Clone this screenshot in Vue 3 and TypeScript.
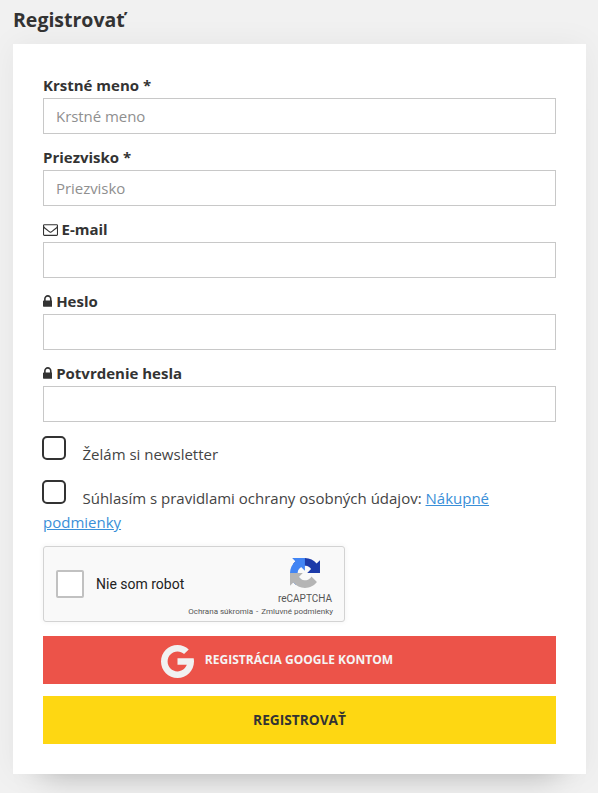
<script setup lang="ts">
import { reactive, ref } from 'vue'

interface Field {
  id: string
  label: string
  type: string
  placeholder?: string
  icon?: 'envelope' | 'lock'
}

const fields: Field[] = [
  { id: 'first', label: 'Krstné meno *', type: 'text', placeholder: 'Krstné meno' },
  { id: 'last', label: 'Priezvisko *', type: 'text', placeholder: 'Priezvisko' },
  { id: 'email', label: 'E-mail', type: 'email', icon: 'envelope' },
  { id: 'password', label: 'Heslo', type: 'password', icon: 'lock' },
  { id: 'confirm', label: 'Potvrdenie hesla', type: 'password', icon: 'lock' },
]

const values = reactive<Record<string, string>>({ first: '', last: '', email: '', password: '', confirm: '' })
const newsletter = ref(false)
const terms = ref(false)
const robot = ref(false)
</script>

<template>
  <main class="page">
    <h1 class="title">Registrovať</h1>
    <form class="card" @submit.prevent>
      <div v-for="f in fields" :key="f.id" class="field">
        <label class="label" :for="f.id">
          <svg v-if="f.icon === 'envelope'" class="envelope" viewBox="0 0 1792 1792">
            <path d="M1664 1504v-768q-32 36-69 66-268 206-426 338-51 43-83 67t-86.500 48.500-102.500 24.500h-2q-48 0-102.500-24.500t-86.500-48.500-83-67q-158-132-426-338-37-30-69-66v768q0 13 9.500 22.500t22.500 9.500h1472q13 0 22.500-9.500t9.500-22.500zm0-1051v-24.500l-.5-13-3-12.500-5.500-9-9-7.500-14-2.500h-1472q-13 0-22.500 9.500t-9.500 22.500q0 168 147 284 193 152 401 317 6 5 35 29.500t46 37.500 44.500 31.500 50.500 27.500 43 9h2q20 0 43-9t50.500-27.500 44.500-31.500 46-37.500 35-29.500q208-165 401-317 54-43 100.500-115.500t46.500-131.500zm128-37v1088q0 66-47 113t-113 47h-1472q-66 0-113-47t-47-113v-1088q0-66 47-113t113-47h1472q66 0 113 47t47 113z" />
          </svg>
          <svg v-else-if="f.icon === 'lock'" class="lock" viewBox="320 0 1152 1792">
            <path d="M640 768h512v-192q0-106-75-181t-181-75-181 75-75 181v192zm832 96v576q0 40-28 68t-68 28h-960q-40 0-68-28t-28-68v-576q0-40 28-68t68-28h32v-192q0-184 132-316t316-132 316 132 132 316v192h32q40 0 68 28t28 68z" />
          </svg>
          <span>{{ f.label }}</span>
        </label>
        <input :id="f.id" v-model="values[f.id]" class="input" :type="f.type" :placeholder="f.placeholder" />
      </div>

      <div class="check">
        <input id="newsletter" v-model="newsletter" class="box" type="checkbox" />
        <label for="newsletter">Želám si newsletter</label>
      </div>
      <div class="check">
        <input id="terms" v-model="terms" class="box" type="checkbox" />
        <label for="terms">Súhlasím s pravidlami ochrany osobných údajov:</label>{{ ' ' }}<a href="#">Nákupné podmienky</a>
      </div>

      <div class="captcha">
        <input id="robot" v-model="robot" class="robot" type="checkbox" />
        <label class="robot-label" for="robot">Nie som robot</label>
        <div class="brand">
          <svg class="brand-logo" viewBox="0 0 64 64">
            <path fill="#1c3aa9" d="M64 31.955l-.033-1.370V4.687l-7.160 7.160C50.948 4.674 42.033.093 32.050.093c-10.400 0-19.622 4.960-25.458 12.640l11.736 11.860a15.550 15.550 0 0 1 4.754-5.334c2.050-1.600 4.952-2.906 8.968-2.906.485 0 .860.057 1.135.163 4.976.393 9.288 3.140 11.828 7.124l-8.307 8.307L64 31.953" />
            <path fill="#4285f4" d="M31.862.094l-1.370.033H4.594l7.160 7.160C4.580 13.147 0 22.060 0 32.046c0 10.400 4.960 19.622 12.640 25.458L24.500 45.768a15.550 15.550 0 0 1-5.334-4.754c-1.600-2.050-2.906-4.952-2.906-8.968 0-.485.057-.860.163-1.135.393-4.976 3.140-9.288 7.124-11.828l8.307 8.307L31.860.095" />
            <path fill="#b5b5b5" d="M.001 32.045l.033 1.370v25.898l7.160-7.160c5.860 7.173 14.774 11.754 24.760 11.754 10.400 0 19.622-4.960 25.458-12.640l-11.736-11.860a15.550 15.550 0 0 1-4.754 5.334c-2.050 1.600-4.952 2.906-8.968 2.906-.485 0-.860-.057-1.135-.163-4.976-.393-9.288-3.140-11.828-7.124l8.307-8.307c-10.522.040-22.400.066-27.295-.005" />
          </svg>
          <span class="brand-name">reCAPTCHA</span>
          <span class="legal">Ochrana súkromia<i>-</i>Zmluvné podmienky</span>
        </div>
      </div>

      <button class="btn google" type="button">
        <svg class="g" viewBox="4 4 40 40">
          <path d="M43.611 20.083H24v8h11.303C33.654 32.657 29.223 36 24 36c-6.627 0-12-5.373-12-12s5.373-12 12-12c3.059 0 5.842 1.154 7.961 3.039l5.657-5.657C34.046 6.053 29.268 4 24 4 12.955 4 4 12.955 4 24s8.955 20 20 20 20-8.955 20-20c0-1.341-.138-2.650-.389-3.917z" />
        </svg>
        <span>REGISTRÁCIA GOOGLE KONTOM</span>
      </button>
      <button class="btn submit" type="submit">REGISTROVAŤ</button>
    </form>
  </main>
</template>

<style>
body {
  background: #f1f1f1;
  overflow: hidden;
}
</style>

<style scoped>
.page {
  box-sizing: border-box;
  height: 793px;
  padding: 5px 12px 0 13px;
  font: 400 15px/24px 'Open Sans', sans-serif;
  color: #333;
}
.title {
  margin: 0 0 9px;
  font-size: 19.500px;
  line-height: 30px;
  font-weight: 700;
}
.card {
  box-sizing: border-box;
  height: 730px;
  padding: 30px;
  background: #fff;
  box-shadow: 0 0 30px rgba(0, 0, 0, 0.05), 0 30px 30px -30px rgba(0, 0, 0, 0.25);
}
.field {
  margin-bottom: 12px;
}
.label {
  display: flex;
  align-items: center;
  gap: 4px;
  box-sizing: border-box;
  height: 24px;
  padding-bottom: 2px;
  font-weight: 700;
}
.label svg {
  height: 15px;
  margin-left: -0.5px;
  fill: #333;
}
.envelope {
  width: 15px;
}
.lock {
  width: 9.640px;
}
.input {
  display: block;
  box-sizing: border-box;
  width: 100%;
  height: 36px;
  padding: 0 12px;
  border: 1px solid #c8c8c8;
  border-radius: 0;
  background: #fff;
  font: inherit;
  letter-spacing: -0.05px;
  color: #333;
  outline: none;
}
.input::placeholder {
  color: #8f8f8f;
  opacity: 1;
}
.check {
  margin-bottom: 12px;
}
.box {
  appearance: none;
  box-sizing: border-box;
  width: 24px;
  height: 24px;
  margin: 2px 16.500px 0 -1px;
  border: 2px solid #333;
  border-radius: 5px;
  vertical-align: 0;
}
.check label {
  color: #444;
}
.check a {
  color: #3a8fd8;
}
.captcha {
  display: flex;
  align-items: center;
  box-sizing: border-box;
  width: 302px;
  height: 76px;
  margin-bottom: 14px;
  padding-left: 12px;
  border: 1px solid #d3d3d3;
  border-radius: 3px;
  background: #f9f9f9;
  box-shadow: 0 0 4px 1px rgba(0, 0, 0, 0.04);
  font-family: Roboto, sans-serif;
  font-weight: 400;
}
.robot {
  appearance: none;
  box-sizing: border-box;
  width: 28px;
  height: 28px;
  margin: 0 12px 0 0;
  border: 2px solid #c1c1c1;
  border-radius: 2px;
  background: #fff;
}
.robot-label {
  font-size: 14px;
  line-height: 17px;
  color: #222;
  white-space: nowrap;
}
.brand {
  display: flex;
  flex-direction: column;
  align-items: flex-end;
  align-self: flex-start;
  margin-left: auto;
  padding: 11px 11px 0 0;
  color: #555;
}
.brand-logo {
  width: 30px;
  height: 30px;
  margin-right: 13px;
}
.brand-name {
  margin: 5px 1px 0 0;
  font-size: 10px;
  line-height: 12px;
}
.legal {
  margin-top: 1px;
  font-size: 8px;
  line-height: 12px;
  white-space: nowrap;
}
.legal i {
  margin: 0 3px;
  font-style: normal;
}
.btn {
  display: flex;
  align-items: center;
  justify-content: center;
  width: 100%;
  height: 48px;
  padding: 0;
  border: 0;
  font: 700 13.700px/24px 'Open Sans', sans-serif;
}
.google {
  gap: 11px;
  margin-bottom: 12px;
  padding-right: 45px;
  background: #ec5349;
  color: #f5f5f5;
  font-size: 12px;
}
.g {
  width: 33px;
  height: 33px;
  margin-top: 3px;
  fill: #f1f1f1;
}
.submit {
  background: #fed712;
  color: #333;
}
</style>
